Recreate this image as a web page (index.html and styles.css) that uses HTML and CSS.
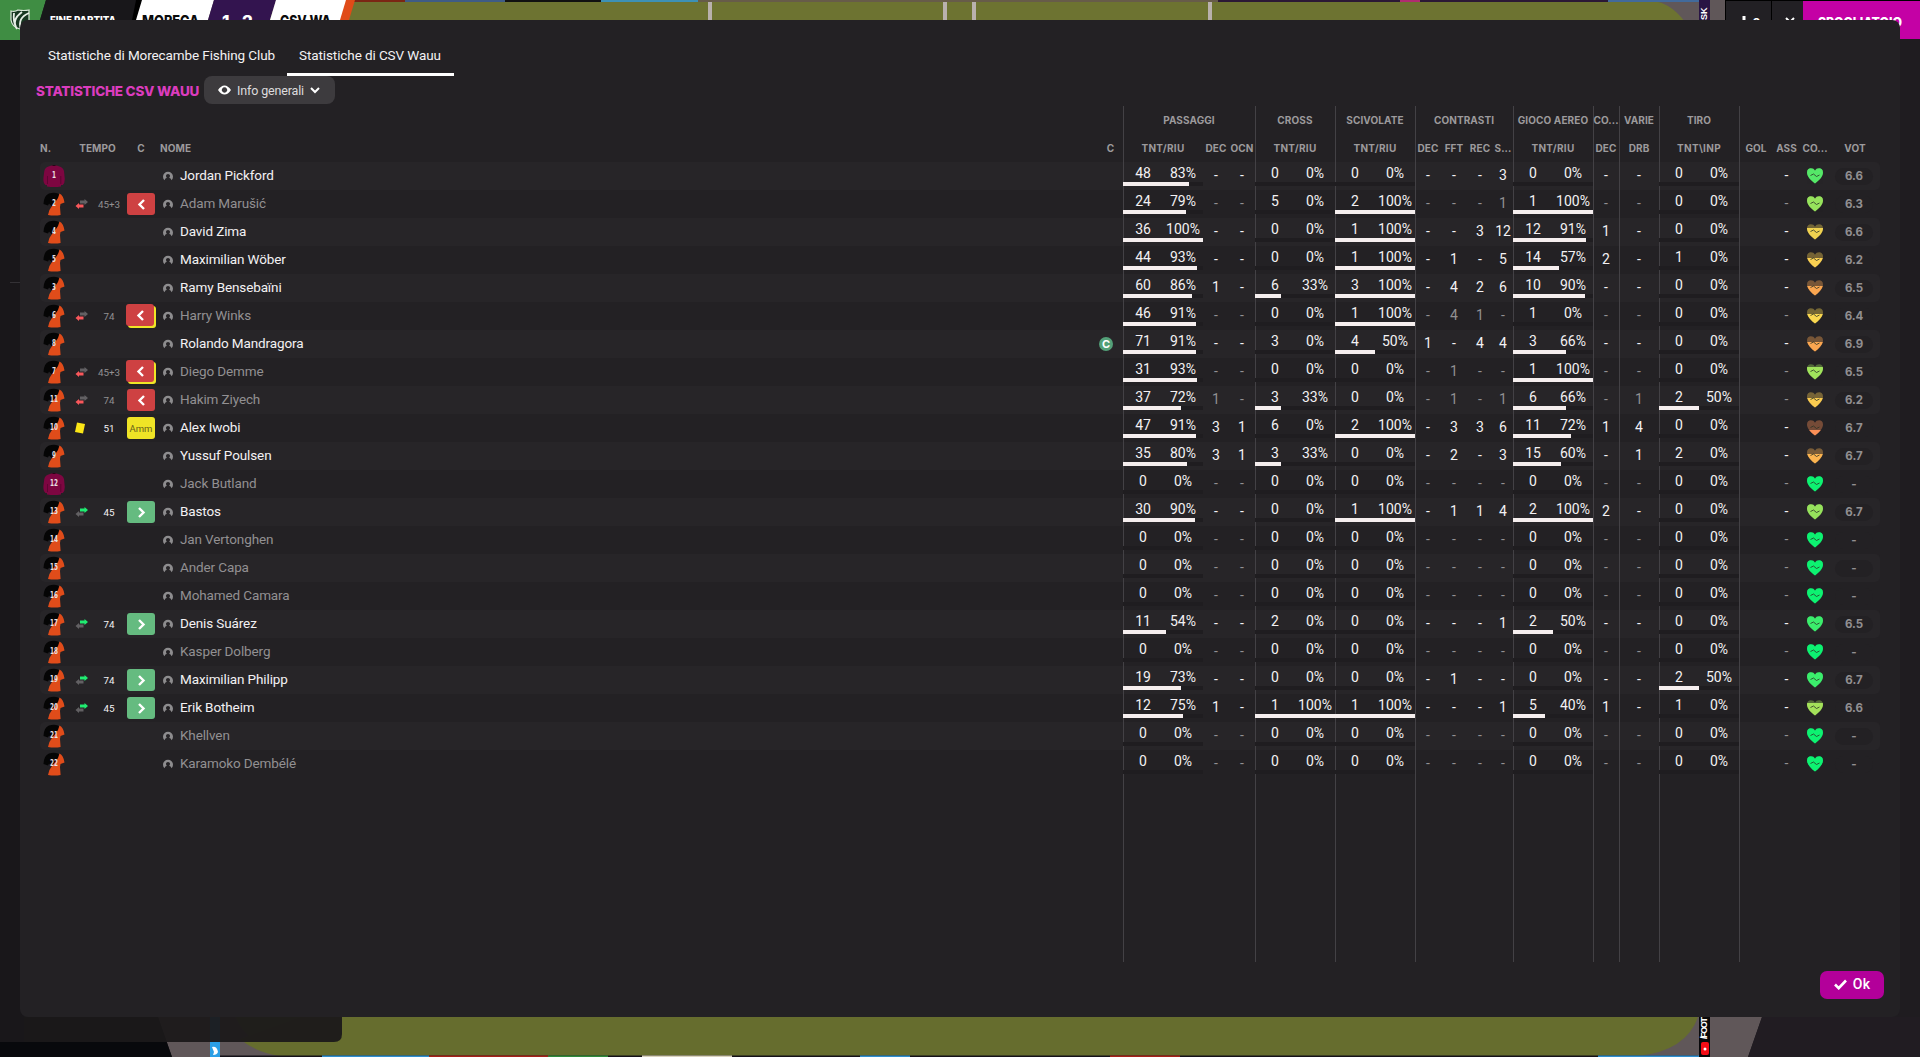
FILE: index.html
```
<!DOCTYPE html>
<html lang="it">
<head>
    <meta charset="UTF-8">
    <meta name="viewport" content="width=device-width, initial-scale=1.0">
    <title>Statistiche CSV Wauu</title>
    <link rel="stylesheet" href="styles.css">
</head>
<body>
    <!-- Shared icons -->
    <svg class="sprites" width="0" height="0">
        <symbol id="shirt" viewBox="0 0 22 24">
            <path d="M6 1.500q5-1.500 9 0l3 3-9 10-3-3-1 2-4.500-1.500Q.8 3.500 6 1.500z" fill="#050505"/>
            <path d="M16.500 1.500q4 2 5 9l-4 1.500-.5 3 .6 8q-6 1-12.600 0 .5-5 4-9l4-5q2.500-3 3.500-7.500z" fill="#e04c1a"/>
        </symbol>
        <symbol id="keeper" viewBox="0 0 22 24">
            <path d="M7 2q4-2 8 0 5 1 6 5l.8 8q0 4-2 6H18v1.500q-7 1-14 0V21H2.500Q0 19 .4 14l.9-7Q2 3 7 2z" fill="#7d0641"/>
            <path d="M4.500 20V12M17.800 20V12" stroke="#5f0431"/>
            <path d="M8 1.500q3-1.200 6 0-3 .8-6 0z" fill="#1b0710"/>
        </symbol>
        <symbol id="person" viewBox="0 0 10 10">
            <path d="M1.500 9.300A5 5 0 1 1 8.500 9.300Q8.300 7.500 6.200 6.700 7.100 6 7 4.600 6.800 3 5 3T3 4.600Q2.900 6 3.800 6.700 1.700 7.500 1.500 9.300z" fill="#8d8c8e"/>
        </symbol>
        <symbol id="heart" viewBox="0 0 16 16">
            <path d="M8 15.500C4 12.500 0 8.500 0 4.500 0 1.500 1.800.2 3.800.2 5.700.2 7.300 1 8 2.700 8.700 1 10.300.2 12.200.2 14.200.2 16 1.500 16 4.500c0 4-4 8-8 11z"/>
        </symbol>
    </svg>

    <svg class="match" viewBox="0 0 1920 1057">
        <rect width="1920" height="1057" fill="#1f1c20"/>
        <path d="M155 0H1735V540L1762 1017 1748 1057H172L158 1017V0z" fill="#605759"/>
        <path d="M320 0H1645q24 0 40 22V990q-8 60-80 66H300q-50-4-65-40V20z" fill="#6d7331"/>
        <path d="M300 1017H1698q-12 34-60 39H280q-25-4-40-17z" fill="#666d2e"/>
        <path d="M710 0v20M945 0v20M974 0v20M1210 0v20" stroke="#b9b1ad" stroke-width="4"/>
        <path d="M350 .5h55M1270 .5h20" stroke="#7b2614" stroke-width="3"/>
        <path d="M405 .5h100" stroke="#3f5c86" stroke-width="3"/>
        <path d="M505 .5h96" stroke="#111" stroke-width="3"/>
        <path d="M601 .5h97" stroke="#3d91b5" stroke-width="3"/>
        <path d="M698 .5h520" stroke="#675c49" stroke-width="3"/>
        <path d="M1218 .5h390" stroke="#2b1835" stroke-width="3"/>
        <path d="M1400 .5h20" stroke="#b02c70" stroke-width="3"/>
        <path d="M1608 .5h92" stroke="#426a9b" stroke-width="3"/>
        <path d="M215 1056.500h1483" stroke="#151219" stroke-width="2"/>
        <path d="M322 1056.500h107M860 1056.500h50M1598 1056.500h102" stroke="#2f8fd0" stroke-width="2"/>
        <path d="M429 1056.500h120M1110 1056.500h70" stroke="#a62119" stroke-width="2"/>
        <path d="M548 1056.500h60" stroke="#2f8a3b" stroke-width="2"/>
        <path d="M642 1056.500h90" stroke="#d9d2bd" stroke-width="2"/>
        <rect x="210" y="1017" width="10" height="40" fill="#2b9fe6"/>
        <path d="M212 1047q5-1 6 5-1 3-5 3l1-3z" fill="#fff"/>
        <rect x="1699" width="11" height="20" fill="#291444"/>
        <text class="board" transform="translate(1707 20) rotate(-90)">SK</text>
        <rect x="1699" y="1017" width="11" height="40" fill="#08080a"/>
        <text class="board" transform="translate(1707 1039) rotate(-90)" textLength="22">/FOOT</text>
        <rect x="1701" y="1042" width="8" height="13" rx="2" fill="#f50d16"/>
        <circle cx="1705" cy="1049" r="1.500" fill="#fff"/>
        <path d="M0 1017H158L172 1057H0z" fill="#08090c"/>
        <path d="M1762 1017H1920V1057H1748z" fill="#211c22"/>
        <path d="M0 1000H342V1034q0 8-8 8H0z" fill="#1b191a" opacity=".95"/>
        <path d="M0 40H24V1042H0z" fill="#19171a"/>
        <path d="M10 282.500H22" stroke="#333135"/>
        <path d="M0 0H46L34 40H0z" fill="#3f8d43"/>
        <path d="M11 11q4 1 7-1 6 1 11 0v10q-2 7-9 9-8-2-9-9z" fill="#183822" stroke="#dce8dc" stroke-width="1.200"/>
        <path d="M22 12q-11 8-5 17M29 13q-12 5-8 16M14 13q-1 8 2 14" fill="none" stroke="#e7efe7" stroke-width="1.800"/>
        <path d="M46 0H136L128 40H34z" fill="#18171a"/>
        <path d="M136 0h10l-8 40h-10z" fill="#000"/>
        <path d="M142 0H214L202 40H130z" fill="#fff"/>
        <path d="M214 0H276L264 40H202z" fill="#33144f"/>
        <path d="M276 0H348L336 40H264z" fill="#fff"/>
        <path d="M346 0h9l-12 40h-9z" fill="#e04b18"/>
        <text class="top" x="50" y="23.500" textLength="66" lengthAdjust="spacingAndGlyphs">FINE PARTITA</text>
        <text class="team" x="142" y="26" textLength="57" lengthAdjust="spacingAndGlyphs">MORECA</text>
        <text class="team score" x="222" y="28">1</text>
        <text class="team score" x="242" y="28">2</text>
        <text class="team" x="280" y="26" textLength="51" lengthAdjust="spacingAndGlyphs">CSV WA</text>
        <path d="M1725 0H1803V40H1725z" fill="#222024"/>
        <path d="M1725.500 0v20M1771.500 0v20M1725 .5h195" stroke="#000"/>
        <path d="M1744 16v8" stroke="#fff" stroke-width="3"/>
        <text class="top" x="1753" y="26">2</text>
        <path d="M1786 18l4 4 4-4" fill="none" stroke="#fff" stroke-width="2"/>
        <path d="M1803 1H1920V39H1803z" fill="#c401a5"/>
        <text class="top locker" x="1818" y="26.500" textLength="84" lengthAdjust="spacingAndGlyphs">SPOGLIATOIO</text>
    </svg>

    <div class="dialog">
        <div class="tabs">
            <a class="tab">Statistiche di Morecambe Fishing Club</a>
            <a class="tab active">Statistiche di CSV Wauu</a>
        </div>
        <div class="title-bar">
            <h1>STATISTICHE CSV WAUU</h1>
            <button class="view-button">
                <svg width="13" height="10" viewBox="0 0 13 10"><path fill-rule="evenodd" d="M0 5Q3 .5 6.500.5T13 5Q10 9.500 6.500 9.500T0 5zM6.500 2.300a2.700 2.700 0 1 0 .01 0z" fill="#fff"/></svg>
                <span>Info generali</span>
                <svg width="10" height="7" viewBox="0 0 10 7"><path d="M1 1l4 4 4-4" fill="none" stroke="#fff" stroke-width="2"/></svg>
            </button>
        </div>

        <div class="table">
            <div class="grid groups">
                <div class="g-empty"></div>
                <div class="line g3">PASSAGGI</div>
                <div class="line">CROSS</div>
                <div class="line">SCIVOLATE</div>
                <div class="line g4">CONTRASTI</div>
                <div class="line">GIOCO AEREO</div>
                <div class="line">CO...</div>
                <div class="line">VARIE</div>
                <div class="line">TIRO</div>
                <div class="line g4"></div>
            </div>
            <div class="grid heads">
                <div class="left">N.</div>
                <div class="tempo-head">TEMPO</div>
                <div></div>
                <div>C</div>
                <div class="left name-head">NOME</div>
                <div>C</div>
                <div class="line ratio-head">TNT/RIU</div>
                <div>DEC</div>
                <div>OCN</div>
                <div class="line ratio-head">TNT/RIU</div>
                <div class="line ratio-head">TNT/RIU</div>
                <div class="line">DEC</div>
                <div>FFT</div>
                <div>REC</div>
                <div>S...</div>
                <div class="line ratio-head">TNT/RIU</div>
                <div class="line">DEC</div>
                <div class="line">DRB</div>
                <div class="line ratio-head">TNT\INP</div>
                <div class="line">GOL</div>
                <div>ASS</div>
                <div>CO...</div>
                <div>VOT</div>
            </div>
            <div id="rows"></div>
            <div class="grid filler">
                <div class="g-empty"></div>
                <div class="line g3"></div>
                <div class="line"></div>
                <div class="line"></div>
                <div class="line g4"></div>
                <div class="line"></div>
                <div class="line"></div>
                <div class="line"></div>
                <div class="line"></div>
                <div class="line g4"></div>
            </div>
        </div>

        <div class="footer">
            <button class="ok-button">
                <svg width="13" height="11" viewBox="0 0 13 11"><path d="M1 5.500l3.700 3.700L12 1.500" fill="none" stroke="#fff" stroke-width="2.600"/></svg>
                <span>Ok</span>
            </button>
        </div>
    </div>

    <script src="script.js"></script>
</body>
</html>
```

FILE: styles.css
```
body {
    margin: 0;
    height: 1057px;
    overflow: hidden;
    background-color: #1f1c20;
    font-family: Roboto, Arial, sans-serif;
    color: #f3f1f3;
    position: relative;
}
.sprites {
    position: absolute;
}
.match {
    position: absolute;
    left: 0;
    top: 0;
    width: 1920px;
    height: 1057px;
}
.board {
    font: bold 9px "Liberation Sans", sans-serif;
    fill: #fff;
}
.top {
    font: 800 11px "Inter", sans-serif;
    fill: #fff;
}
.locker {
    font-size: 13px;
}
.team {
    font: 800 15px "Inter", sans-serif;
    fill: #0b0b0b;
}
.score {
    font-size: 17px;
    fill: #fff;
}
.dialog {
    position: relative;
    box-sizing: border-box;
    width: 1880px;
    height: 997px;
    margin: 20px 0 0 20px;
    padding: 15px 20px 0;
    background-color: #232124;
    border-radius: 8px;
    overflow: hidden;
    display: flex;
    flex-direction: column;
}
.tabs {
    display: flex;
    height: 41px;
}
.tab {
    box-sizing: border-box;
    height: 41px;
    line-height: 41px;
    margin-left: 8px;
    width: 226px;
    font-size: 13.5px;
    letter-spacing: -0.1px;
    white-space: nowrap;
}
.tab.active {
    margin-left: 13px;
    width: 167px;
    padding-left: 12px;
    border-bottom: 3px solid #fff;
}
.title-bar {
    display: flex;
    align-items: center;
    height: 28px;
    margin-left: -4px;
}
h1 {
    margin: 1px 0 0;
    width: 168px;
    font: 800 13.5px Inter, sans-serif;
    letter-spacing: -0.22px;
    color: #db3cbe;
    white-space: nowrap;
}
.view-button {
    display: flex;
    align-items: center;
    gap: 6px;
    box-sizing: border-box;
    width: 131px;
    height: 28px;
    padding: 0 15px 0 14px;
    border: none;
    border-radius: 8px;
    background-color: #3d3b3e;
    color: #dddbdd;
    font: 12.5px Roboto, sans-serif;
    letter-spacing: -0.15px;
    white-space: nowrap;
}
.view-button span {
    flex: 1;
    text-align: left;
}
.table {
    margin-top: 2px;
    height: 856px;
    display: flex;
    flex-direction: column;
}
.grid {
    display: grid;
    grid-template-columns: 30px 53px 3px 30px 942px 25px 80px 26px 26px 80px 80px 26px 26px 26px 20px 80px 26px 40px 80px 34px 27px 30px 50px;
    height: 28px;
    align-items: center;
    text-align: center;
    white-space: nowrap;
}
.grid > div {
    height: 100%;
}
.groups,
.heads {
    font: 700 10px/29px Inter, sans-serif;
    letter-spacing: 0.1px;
    color: #9c9a9c;
}
.ratio-head {
    letter-spacing: 0.3px;
}
.g-empty {
    grid-column: span 6;
}
.g3 {
    grid-column: span 3;
}
.g4 {
    grid-column: span 4;
}
.line {
    box-shadow: inset 1px 0 #434145;
}
.grid > .left {
    text-align: left;
}
.tempo-head {
    padding-left: 2px;
}
.name-head {
    padding-left: 4px;
}
.filler {
    flex: 1;
}
.row {
    border-radius: 5px;
    font-size: 14px;
    line-height: 27px;
}
.row:nth-child(odd) {
    background-color: #272528;
}
.dim {
    color: #929092;
}
.shirt {
    display: flex;
    align-items: center;
    padding-left: 3px;
}
.shirt text {
    font: bold 8.5px "DejaVu Sans Condensed", "Liberation Sans", sans-serif;
    fill: #e9dfe0;
    text-anchor: middle;
}
.time {
    display: flex;
    align-items: center;
    padding-left: 5px;
    font-size: 9.8px;
}
.time svg {
    flex: none;
}
.time span {
    width: 30px;
    flex: none;
    margin-left: 5px;
    padding-top: 1px;
}
.mark {
    display: flex;
    align-items: center;
    justify-content: center;
}
.badge {
    display: flex;
    align-items: center;
    justify-content: center;
    width: 28px;
    height: 22px;
    flex: none;
    border-radius: 3px;
    font-size: 9.5px;
}
.off {
    background-color: #ce4142;
}
.on {
    background-color: #65bb80;
}
.yellow {
    background-color: #efe426;
    color: #66611b;
}
.booked {
    box-shadow: 2px 2px #efe426;
    margin: 0 2px 2px 0;
}
.grid > .name {
    box-sizing: border-box;
    display: flex;
    align-items: center;
    gap: 7px;
    padding: 0 0 1px 7px;
    font-size: 13.5px;
    letter-spacing: -0.12px;
}
.name svg {
    margin-top: 1px;
}
.captain {
    width: 14px;
    height: 14px;
    margin: 7px 0 0 1px;
    border-radius: 50%;
    background-color: #53a078;
    color: #fff;
    font: bold 11px/14px Inter, sans-serif;
}
.ratio {
    display: grid;
    grid-template-columns: 1fr 1fr;
    grid-template-rows: 20px 4px;
    color: #f3f1f3;
    line-height: 23px;
}
.ratio .track {
    grid-column: span 2;
    background-color: #1f1d20;
}
.fill {
    height: 4px;
    background-color: #f5eeee;
}
.heart {
    display: flex;
    align-items: center;
    justify-content: center;
}
.vote {
    display: flex;
    align-items: center;
    justify-content: center;
}
.vote span {
    width: 38px;
    height: 17px;
    margin-right: 2px;
    border-radius: 9px;
    background-color: #232124;
    color: #918f91;
    font: 700 11.5px/17px Inter, sans-serif;
}
.footer {
    display: flex;
    justify-content: flex-end;
    margin-right: -4px;
    padding-top: 9px;
}
.ok-button {
    display: flex;
    align-items: center;
    justify-content: center;
    gap: 6px;
    width: 64px;
    height: 28px;
    padding: 0 0 2px;
    border: none;
    border-radius: 7px;
    background-color: #b3009a;
    color: #fff;
    font: 500 14px Roboto, sans-serif;
    letter-spacing: 0.4px;
}
```

FILE: script.js
```
// number, event, minute, name, dimmed, stats..., heart colour, heart level, vote
const players = [
  [1, '', '', 'Jordan Pickford', 0, '48/83 - - 0/0 0/0 - - - 3 0/0 - - 0/0', '#55e868', 0, '6.6'],
  [2, 'off', '45+3', 'Adam Marušić', 1, '24/79 - - 5/0 2/100 - - - 1 1/100 - - 0/0', '#96e25c', 0, '6.3'],
  [4, '', '', 'David Zima', 0, '36/100 - - 0/0 1/100 - - 3 12 12/91 1 - 0/0', '#f0d250', 4, '6.6'],
  [5, '', '', 'Maximilian Wöber', 0, '44/93 - - 0/0 1/100 - 1 - 5 14/57 2 - 1/0', '#fad052', 6, '6.2'],
  [3, '', '', 'Ramy Bensebaïni', 0, '60/86 1 - 6/33 3/100 - 4 2 6 10/90 - - 0/0', '#fba650', 6, '6.5'],
  [6, 'off booked', '74', 'Harry Winks', 1, '46/91 - - 0/0 1/100 - 4 1 - 1/0 - - 0/0', '#f9d750', 6, '6.4'],
  [8, '', '', 'Rolando Mandragora', 0, '71/91 - - 3/0 4/50 1 - 4 4 3/66 - - 0/0', '#fba650', 6, '6.9'],
  [7, 'off booked', '45+3', 'Diego Demme', 1, '31/93 - - 0/0 0/0 - 1 - - 1/100 - - 0/0', '#a1e45c', 3, '6.5'],
  [11, 'off', '74', 'Hakim Ziyech', 1, '37/72 1 - 3/33 0/0 - 1 - 1 6/66 - 1 2/50', '#facb50', 6, '6.2'],
  [10, 'yellow', '51', 'Alex Iwobi', 0, '47/91 3 1 6/0 2/100 - 3 3 6 11/72 1 4 0/0', '#fb9057', 10, '6.7'],
  [9, '', '', 'Yussuf Poulsen', 0, '35/80 3 1 3/33 0/0 - 2 - 3 15/60 - 1 2/0', '#fbb450', 6, '6.7'],
  [12, '', '', 'Jack Butland', 1, '0/0 - - 0/0 0/0 - - - - 0/0 - - 0/0', '#0df271', 0, '-'],
  [13, 'on', '45', 'Bastos', 0, '30/90 - - 0/0 1/100 - 1 1 4 2/100 2 - 0/0', '#96e25c', 0, '6.7'],
  [14, '', '', 'Jan Vertonghen', 1, '0/0 - - 0/0 0/0 - - - - 0/0 - - 0/0', '#0df271', 0, '-'],
  [15, '', '', 'Ander Capa', 1, '0/0 - - 0/0 0/0 - - - - 0/0 - - 0/0', '#0df271', 0, '-'],
  [16, '', '', 'Mohamed Camara', 1, '0/0 - - 0/0 0/0 - - - - 0/0 - - 0/0', '#0df271', 0, '-'],
  [17, 'on', '74', 'Denis Suárez', 0, '11/54 - - 2/0 0/0 - - - 1 2/50 - - 0/0', '#3bed6c', 0, '6.5'],
  [18, '', '', 'Kasper Dolberg', 1, '0/0 - - 0/0 0/0 - - - - 0/0 - - 0/0', '#0df271', 0, '-'],
  [19, 'on', '74', 'Maximilian Philipp', 0, '19/73 - - 0/0 0/0 - 1 - - 0/0 - - 2/50', '#3bed6c', 0, '6.7'],
  [20, 'on', '45', 'Erik Botheim', 0, '12/75 1 - 1/100 1/100 - - - 1 5/40 1 - 1/0', '#a4e15a', 3, '6.6'],
  [21, '', '', 'Khellven', 1, '0/0 - - 0/0 0/0 - - - - 0/0 - - 0/0', '#0df271', 0, '-'],
  [22, '', '', 'Karamoko Dembélé', 1, '0/0 - - 0/0 0/0 - - - - 0/0 - - 0/0', '#0df271', 0, '-']
];

// columns that start a new group
const groupStart = [0, 3, 4, 5, 9, 10, 11, 12];

function shirt(number) {
  const kind = number === 1 || number === 12 ? 'keeper' : 'shirt';
  return `<svg width="22" height="24" viewBox="0 0 22 24"><use href="#${kind}" width="22" height="24"/>
    <text x="11" y="13.5" textLength="${number > 9 ? 8 : 4}" lengthAdjust="spacingAndGlyphs">${number}</text></svg>`;
}

function eventIcon(type) {
  if (!type) return '<svg width="14" height="14"></svg>';
  if (type === 'yellow') {
    return '<svg width="14" height="14"><path d="M2 1.500l8 1.500L8 12.500 0 11z" fill="#fbe616"/></svg>';
  }
  const on = type === 'on';
  const right = `<path d="M5 3.500h4.500V2L13 5l-3.500 3V6.500H5z" fill="${on ? '#20ec71' : '#626063'}"/>`;
  const left = `<path d="M8.500 7.500H4V6L.5 9 4 12v-1.500h4.500z" fill="${on ? '#626063' : '#f9575b'}"/>`;
  return `<svg width="14" height="14">${on ? left + right : right + left}</svg>`;
}

function badge(type) {
  if (!type) return '';
  if (type === 'yellow') return '<div class="badge yellow">Amm</div>';
  const d = type === 'on' ? 'M2 1l4.500 4.500L2 10' : 'M7 1L2.500 5.500 7 10';
  return `<div class="badge ${type}"><svg width="9" height="11"><path d="${d}" fill="none" stroke="#fff" stroke-width="2.400"/></svg></div>`;
}

function stat(value, i) {
  const line = groupStart.includes(i) ? 'line' : '';
  if (!value.includes('/')) return `<div class="${line}">${value}</div>`;
  const [count, percent] = value.split('/');
  return `<div class="ratio ${line}"><span>${count}</span><span>${percent}%</span>
    <div class="track"><div class="fill" style="width: ${percent}%"></div></div></div>`;
}

function heart(color, level) {
  return `<svg width="16" height="16" viewBox="0 0 16 16" fill="${color}">
    <use href="#heart" width="16" height="16" opacity=".38"/>
    <svg y="${level}" width="16" height="${16 - level}" viewBox="0 ${level} 16 ${16 - level}"><use href="#heart" width="16" height="16"/></svg>
    <path d="M3.500 7.500l3-1.500 3 2.500 3-1.500" fill="none" stroke="#2b3426" stroke-width=".8"/></svg>`;
}

document.getElementById('rows').innerHTML = players.map(p => {
  const [number, type, minute, name, dim, stats, color, level, vote] = p;
  return `<div class="grid row ${dim ? 'dim' : ''}">
    <div class="shirt">${shirt(number)}</div>
    <div class="time">${eventIcon(type)}<span>${minute}</span></div>
    <div></div>
    <div class="mark">${badge(type)}</div>
    <div class="name"><svg width="10" height="10"><use href="#person" width="10" height="10"/></svg>${name}</div>
    <div>${number === 8 ? '<div class="captain">C</div>' : ''}</div>
    ${stats.split(' ').map(stat).join('')}
    <div class="line"></div>
    <div>-</div>
    <div class="heart">${heart(color, level)}</div>
    <div class="vote"><span>${vote}</span></div>
  </div>`;
}).join('');
```
